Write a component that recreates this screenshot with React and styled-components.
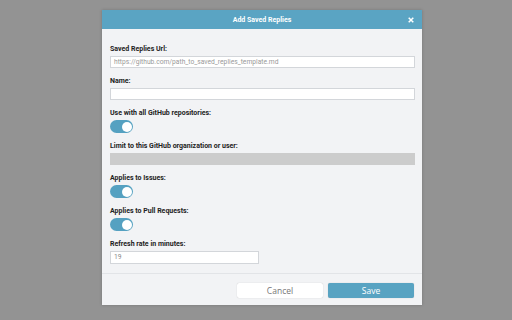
import React from "react";
import styled, { createGlobalStyle } from "styled-components";

const Global = createGlobalStyle`
  html, body { margin: 0; padding: 0; }
  body { background: #939393; font-family: Roboto, "Liberation Sans", sans-serif; }
  * { box-sizing: border-box; }
`;

const Page = styled.div`
  width: 512px;
  height: 320px;
  padding: 10px 0 0 102px;
`;

const Dialog = styled.div`
  width: 320px;
  height: 295px;
  background: #f2f3f5;
  display: flex;
  flex-direction: column;
  box-shadow: 0 0 3px rgba(0,0,0,0.2);
`;

const Header = styled.div`
  position: relative;
  height: 19px;
  background: #5aa4c3;
  color: #fff;
  font-size: 7px;
  font-weight: 700;
  display: flex;
  align-items: center;
  justify-content: center;
`;

const Close = styled.span`
  position: absolute;
  right: 8px;
  top: 7px;
  width: 6px;
  height: 6px;
  display: flex;
`;

const Body = styled.div`
  flex: 1;
  padding: 15px 7px 0 8px;
  display: flex;
  flex-direction: column;
  gap: 8px;
  border-bottom: 1px solid #e2e4e7;
`;

const Field = styled.div`
  display: flex;
  flex-direction: column;
  align-items: flex-start;
`;

const Label = styled.div`
  font-size: 7px;
  font-weight: 700;
  color: #222;
  line-height: 10px;
  margin-bottom: 2px;
`;

const Input = styled.div`
  width: ${p => p.$w || "100%"};
  height: ${p => p.$h || "12px"};
  background: ${p => (p.$disabled ? "#cccccc" : "#fff")};
  border: 1px solid ${p => (p.$disabled ? "#cccccc" : "#d3d6da")};
  font-size: 6.7px;
  color: ${p => (p.$dim ? "#9a9a9a" : "#888")};
  line-height: ${p => (p.$h ? "11px" : "10px")};
  padding: 0 3px;
  white-space: nowrap;
  overflow: hidden;
`;

const Toggle = styled.div`
  width: 23px;
  height: 13px;
  border-radius: 7px;
  background: #55a1c1;
  position: relative;
  &::after {
    content: "";
    position: absolute;
    right: 1.5px;
    top: 1.5px;
    width: 10px;
    height: 10px;
    border-radius: 50%;
    background: #fff;
  }
`;

const Footer = styled.div`
  height: 31px;
  padding: 9px 8px 0 0;
  display: flex;
  justify-content: flex-end;
  gap: 5px;
  flex-shrink: 0;
`;

const Button = styled.div`
  width: 86px;
  height: 15px;
  border-radius: 2px;
  display: flex;
  align-items: center;
  justify-content: center;
  font-family: "Open Sans", sans-serif;
  font-size: 8.5px;
  background: ${p => (p.$primary ? "#58a3c2" : "#fff")};
  color: ${p => (p.$primary ? "#fff" : "#777")};
  box-shadow: 0 0 1px rgba(0,0,0,0.25);
`;

export default function App() {
  return (
    <>
      <Global />
      <Page>
        <Dialog>
          <Header>
            Add Saved Replies
            <Close>
              <svg width="6" height="6" viewBox="0 0 6 6">
                <path d="M0.7 0.7 L5.3 5.3 M5.3 0.7 L0.7 5.3" stroke="#fff" strokeWidth="1.5" />
              </svg>
            </Close>
          </Header>
          <Body>
            <Field>
              <Label>Saved Replies Url:</Label>
              <Input $dim>https://github.com/path_to_saved_replies_template.md</Input>
            </Field>
            <Field>
              <Label>Name:</Label>
              <Input />
            </Field>
            <Field>
              <Label>Use with all GitHub repositories:</Label>
              <Toggle />
            </Field>
            <Field>
              <Label>Limit to this GitHub organization or user:</Label>
              <Input $disabled />
            </Field>
            <Field>
              <Label>Applies to Issues:</Label>
              <Toggle />
            </Field>
            <Field>
              <Label>Applies to Pull Requests:</Label>
              <Toggle />
            </Field>
            <Field>
              <Label>Refresh rate in minutes:</Label>
              <Input $w="149px" $h="13px">19</Input>
            </Field>
          </Body>
          <Footer>
            <Button>Cancel</Button>
            <Button $primary>Save</Button>
          </Footer>
        </Dialog>
      </Page>
    </>
  );
}
